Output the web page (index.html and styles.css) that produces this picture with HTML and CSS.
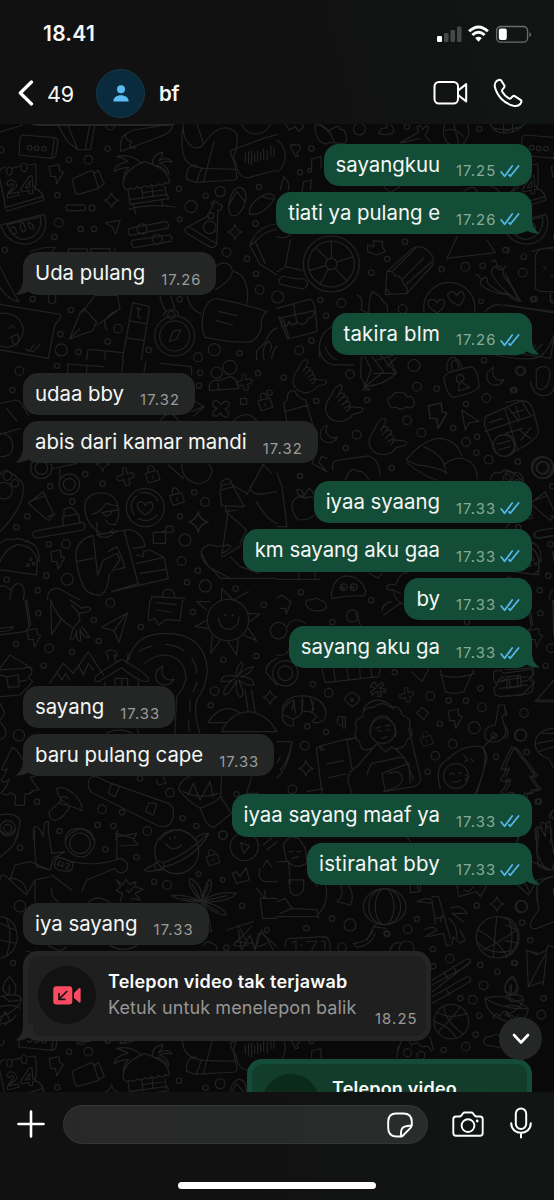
FILE: index.html
```html
<!DOCTYPE html>
<html lang="id">
<head>
<meta charset="utf-8">
<title>bf</title>
<link rel="stylesheet" href="styles.css">
</head>
<body>
<svg class="defs" width="0" height="0">
  <defs>
    <symbol id="ticks" viewBox="0 0 20 14"><path d="M1.2 8 4.600 12.200 12.200 2M9 10.800 10.300 12.200 18.600 2" fill="none" stroke="#53b7ea" stroke-width="1.8" stroke-linejoin="round" stroke-linecap="round"/></symbol>
    <symbol id="tail" viewBox="0 0 18 16"><path d="M0 0H10C10 7 12.500 12.500 18 15.500C12 16 7.500 14.500 4.500 12.300L0 15Z" fill="currentColor"/></symbol>
    <symbol id="star" viewBox="0 0 54 54"><path d="M27 2Q30 22 51 27Q30 32 27 52Q22 32 3 27Q22 22 27 2Z"/></symbol>
    <symbol id="bolt" viewBox="0 0 50 64"><path d="M4 8 33 2 35 21 46 25 26 60 23 37 8 37Z"/></symbol>
    <symbol id="lock" viewBox="0 0 60 64"><path d="M7 30 46 20 55 50 18 61ZM17 26C9 1 33-4 38 22M31 38V46"/></symbol>
    <symbol id="moon" viewBox="0 0 64 64"><path d="M26 3C-8 16-1 62 34 60Q51 59 59 42C36 52 14 29 26 3Z"/></symbol>
    <symbol id="hand" viewBox="0 0 120 120"><path d="M3 80C2 57 18 44 27 23Q35 7 49 4Q58 9 47 27L38 42M43 34Q56 25 61 35L43 54M57 42Q73 37 70 50L52 66M66 56Q80 52 77 65L60 75M75 68Q80 76 67 85M77 70 110 73Q123 80 108 87L85 93C69 120 15 127 3 80"/></symbol>
    <symbol id="cross" viewBox="0 0 60 60"><path d="M21 3Q29-2 33 8L34 21 49 18Q60 22 53 32L39 37 43 51Q36 61 28 53L25 39 11 43Q-1 37 6 28L22 24Z"/></symbol>
    <symbol id="tree" viewBox="0 0 120 180"><path d="M37 2 5 68Q15 74 22 64Q18 83 3 102Q18 111 27 97Q20 125 3 139Q22 151 32 138L47 147 45 176H73L76 141Q91 145 98 132Q112 132 117 128Q101 111 91 90Q102 93 107 87Q92 73 84 56L63 31Q48 4 37 2Z"/></symbol>

    <g id="doodles">
      <g transform="translate(0 120) scale(.3333)">
        <path d="M60 52 67 45 165 53 174 60 167 110 156 115 57 105ZM155 115 163 54M0 36 60 18 70 10M170 10 203 65 235 90 272 88 285 10M205 18 233 89M270 10 256 88M362 94C357 55 370 40 402 30L520 12C515 35 500 43 470 54ZM385 38C370 42 375 62 395 64C385 75 390 88 407 83"/>
        <circle cx="89" cy="83" r="7"/><circle cx="110" cy="85" r="7"/><circle cx="132" cy="86" r="7"/>
        <path d="M0 155Q-2 145 15 142M35 145 62 138M84 135 106 132Q112 180 105 205Q130 215 132 240L22 273Q15 272 13 240L0 180M16 262 128 230"/>
        <ellipse cx="28" cy="153" rx="8" ry="12"/><ellipse cx="72" cy="142" rx="9" ry="13"/>
        <path d="M20 192C26 168 53 183 49 200 47 210 28 213 26 221L55 216 57 225 23 234C15 218 40 205 41 196 38 187 29 192 29 198ZM63 206 87 169 96 167 98 200 106 199 107 207 98 209 98 220 88 221 87 211 64 216ZM76 204 89 202V183Z"/>
        <path d="M2 315 132 283C145 315 134 358 90 371 51 377 15 358 2 315ZM21 314 122 291C127 330 103 354 73 358 51 358 31 342 21 314ZM36 322C45 313 55 340 45 342 34 342 28 330 36 322ZM65 308C73 306 80 333 72 336 62 334 58 314 65 308ZM84 307Q102 311 101 326Q86 331 84 307Z"/>
        <path d="M218 186Q216 175 228 172L270 153Q279 150 282 160L296 205 235 223Q227 223 225 214ZM281 162 295 151 313 192 295 204"/>
        <path d="M202 255H253Q261 264 253 272H203Q192 263 202 255ZM316 308 361 301 347 341 337 321Z"/>
        <path d="M369 193Q370 150 433 125Q504 145 508 187Q504 195 496 187 487 201 477 191 466 204 455 194 444 206 434 197 422 209 411 200 401 213 390 205 378 214 372 202ZM384 209 389 240M495 199 499 228M388 239 502 223 506 236 390 253ZM400 252 407 282M485 239 488 259M425 203 429 236M456 198 459 230M386 268Q450 250 525 261M425 218 490 210M426 130Q390 98 350 110Q370 113 383 124Q345 132 342 155Q365 141 386 143Q366 164 372 184M458 132Q454 105 488 97Q490 108 476 121Q506 108 516 126Q497 121 478 129Q505 137 507 163Q485 136 468 137"/>
        <path d="M388 325 500 304Q511 315 501 325L390 346Q380 336 388 325ZM396 361 510 345Q520 356 512 364L403 383Q390 375 396 361Z"/><circle cx="426" cy="327" r="15"/><circle cx="472" cy="358" r="15"/>
        <path d="M550 10C545 65 585 105 611 72Q664-5 710 40Q715 80 702 105C697 137 710 150 711 174L705 180 587 187 560 178Q558 146 573 138L612 145 708 148M611 72 590 10M548 25Q535 138 590 136M642 65 610 188M604 146 590 184"/>
        <path d="M692 92 790 55 831 44M692 92Q690 105 708 130Q715 178 748 172L831 150M736 101V126M746 95V132M755 93V135M764 101V125M773 92V124M782 98V119M791 87V117M802 90V121M813 78V109M822 85V110"/>
        <circle cx="768" cy="-5" r="47"/>
        <path d="M634 252 642 242 668 258 663 270 654 269 650 373Q642 388 628 380L558 338Q550 328 561 322L621 290 642 250M567 321 651 372"/><circle cx="629" cy="322" r="19"/><circle cx="633" cy="287" r="9"/>
        <path d="M692 283C677 259 696 205 716 202 749 202 741 258 716 281 707 289 698 289 692 283ZM689 252 710 214 734 244M748 280C745 252 794 211 820 225 831 242 786 286 755 283ZM787 230 823 240M750 376Q770 317 831 312M750 376 779 432 831 465M750 376 766 365 795 430M766 365Q792 334 831 327"/>
        <path d="M0 440Q20 482 56 545 25 540 0 502M90 395Q130 380 165 382L156 397M205 397V387H262V397M272 397V386H330V397M345 395V387"/>
        <path d="M0 553 181 583Q188 590 165 613 154 665 145 715L0 690M0 580C48 575 78 610 67 645 54 683 20 687 0 677M27 625Q35 610 43 625M28 654Q44 647 53 642Q62 667 48 674Q35 670 36 652M77 687 86 694 102 675M91 692 98 696 121 672"/>
        <path d="M240 579 209 657 278 632 290 606 252 565ZM209 656 239 628M247 576 285 526H352L360 566 292 616M352 570Q298 597 321 630M146 525V545Q156 558 167 545V525M398 548 449 560 424 720M398 548 367 720M388 603 438 611M380 654 430 661M409 565 423 569M415 562V592L421 595M260 720 264 688 370 698M315 720V694"/>
        <circle cx="524" cy="648" r="60"/><circle cx="524" cy="648" r="45"/><circle cx="514" cy="585" r="11"/><path d="M508 664 519 635 542 629 531 657ZM492 587Q493 571 514 569 538 571 536 589M498 574Q480 545 480 525M525 567 511 525"/>
        <path d="M648 440C674 415 702 438 696 461 690 482 667 497 647 509M702 455C734 461 752 509 739 556M560 523Q572 573 603 580M608 630C603 594 612 538 650 536Q729 550 801 575 781 587 784 622 781 648 752 666 704 670 615 652ZM654 574 710 587M648 602 698 615M831 623Q805 637 799 663L770 693V720M793 720C785 702 790 671 808 665Q820 673 811 693M831 678Q820 690 815 715"/>
        <use href="#bolt" x="144" y="132" width="50" height="64"/><use href="#star" x="310" y="216" width="50" height="50"/><use href="#star" x="680" y="311" width="50" height="50"/>
        <circle cx="3" cy="90" r="9"/><circle cx="207" cy="119" r="8"/><circle cx="265" cy="119" r="13"/><circle cx="323" cy="86" r="8"/><circle cx="331" cy="17" r="13"/><circle cx="172" cy="226" r="8"/><circle cx="276" cy="264" r="9"/><circle cx="176" cy="308" r="13"/><circle cx="163" cy="351" r="8"/><circle cx="242" cy="327" r="8"/><circle cx="282" cy="327" r="8"/><circle cx="537" cy="206" r="8"/><circle cx="573" cy="260" r="18"/><circle cx="539" cy="298" r="7"/><circle cx="617" cy="227" r="8"/><circle cx="661" cy="215" r="15"/><circle cx="777" cy="201" r="8"/><circle cx="767" cy="311" r="8"/><circle cx="680" cy="397" r="13"/><circle cx="741" cy="416" r="8"/><circle cx="768" cy="462" r="8"/><circle cx="779" cy="509" r="13"/><circle cx="14" cy="390" r="8"/><circle cx="98" cy="537" r="8"/><circle cx="213" cy="570" r="8"/><circle cx="181" cy="642" r="8"/><circle cx="184" cy="690" r="18"/><circle cx="354" cy="626" r="13"/><circle cx="323" cy="665" r="8"/><circle cx="236" cy="696" r="8"/><circle cx="446" cy="690" r="8"/><circle cx="539" cy="538" r="8"/><circle cx="643" cy="689" r="18"/><circle cx="719" cy="700" r="8"/><circle cx="594" cy="712" r="13"/>
      </g>
      <g transform="translate(277)  scale(.3333)">
        <path d="M115 376Q110 392 126 421 142 438 162 427L203 432Q212 424 205 400 204 387 190 388 187 374 174 382L155 392 133 374ZM132 377Q160 392 172 425M25 372 36 390 55 380 66 394 80 382 75 370M305 400Q310 380 330 384L328 372M305 400Q335 410 350 396 350 377 340 376M370 428 425 397 420 380 430 376 437 388 448 376 455 384 444 407 462 428M375 428 430 415M505 370C490 402 508 434 525 434M560 430Q585 400 570 370M530 370 545 430M505 390Q535 382 560 410M640 372C655 410 710 408 745 370M652 385Q700 395 735 380M680 372V399M707 372V398M44 434Q38 437 42 444L56 470 63 469 60 457Q75 447 67 435ZM0 420Q28 440 24 474 20 505 0 517M104 511 104 477 132 470 132 504M20 530Q40 545 34 570M20 530 10 570M75 575 80 545 103 540 100 568"/>
        <circle cx="247" cy="387" r="18"/><circle cx="390" cy="380" r="8"/><circle cx="607" cy="387" r="8"/><circle cx="103" cy="446" r="8"/><circle cx="69" cy="517" r="8"/><circle cx="98" cy="511" r="6"/><path d="M640 558Q660 560 685 600M320 560 340 578 368 560M560 575Q590 550 600 575M0 710Q30 720 42 700"/>
      </g>
      <g transform="translate(277 240) scale(.3333)">
        <circle cx="163" cy="72" r="84"/><circle cx="163" cy="72" r="69"/><circle cx="163" cy="72" r="17"/><path d="M163 3V55M228 50 179 66M210 123 174 85M130 132 154 87M97 92 147 77M115 22 152 58M40 0 25 80 75 91M0 95 25 80M15 110 5 120 10 133 75 147Q95 143 90 125 75 110 65 118L15 108"/>
        <path d="M330 95 407 25Q430 12 452 32 478 50 465 78L390 160 325 164ZM330 95Q350 90 353 108 375 105 379 133 395 140 390 160M348 92 418 23M378 116 440 54M389 132 463 66M327 145 342 163M272 15 290 20 290 2 318 5 315 18 325 35 298 45 272 35ZM540-10 510 55 655 38 630 0"/>
        <circle cx="517" cy="204" r="77"/><path d="M480 219C443 198 450 178 465 178Q478 179 480 189 490 171 502 182 507 201 480 219ZM545 197C506 179 508 162 520 156Q535 153 539 167 549 150 558 158 570 177 545 197Z"/>
        <path d="M605 107Q610 125 625 112 635 113 629 126 658 158 695 165 640 159 612 135 605 120 625 112M645 105Q640 83 655 79 685 75 678 105 705 137 725 181 680 158 645 105ZM655 80Q675 100 685 78M660 75 655 60 645 65M605 105 595 105M775 60Q773 23 812 25L850 30M775 60V145Q780 155 800 155H850M820 108H850M800 80 806 88M625 215Q645 190 675 195L831 215M655 345Q750 365 790 350Q815 330 831 285M700 345 720 345M820 160V180Q831 190 850 180"/>
        <path d="M0 205 98 178Q113 180 116 220L120 275 32 297 5 230M5 235 113 212M20 240 35 292M50 195 60 250M15 235V260Q35 260 35 243 45 265 60 245 82 265 95 234 112 230 112 215M240 165Q260 170 253 210L275 220Q275 180 285 155 315 170 318 185 337 192 330 220M127 350V320Q130 275 170 258M127 320Q128 365 170 375H230M145 320Q153 350 180 360"/>
        <use href="#hand" x="45" y="355" width="108" height="108"/><use href="#hand" x="142" y="430" width="120" height="120"/><use href="#hand" x="273" y="530" width="120" height="120"/>
        <path d="M253 350 251 410 265 438Q315 440 358 400L335 350M263 350 283 390 263 438M285 350 320 395 263 440M310 345 358 400 290 400M300 360 350 345M330 380 358 353M265 440 280 450 258 450Z"/>
        <path d="M335 490Q325 475 345 470 350 455 372 458 388 458 388 470 412 465 412 492 405 510 387 500 373 515 358 501 338 508 335 490ZM515 397 581 380Q604 387 606 440 600 457 530 472 510 470 500 412ZM510 393C505 345 540 335 556 385M525 388Q520 360 535 360 545 365 545 384M540 425C530 400 563 396 561 418Q558 423 551 424L577 443 544 453 548 427ZM554 510 606 544 576 549 565 571ZM778 390C800 370 825 380 818 412L812 435Q793 460 778 440ZM760 425C770 480 825 475 831 445"/>
        <path d="M625 530Q680 505 735 482 760 480 770 515L785 575Q780 600 730 625L685 650Q660 650 650 620L622 555ZM622 575 770 525M684 506 720 625M637 548 676 535M703 520 740 510M716 498 727 532M727 570 762 597M762 562 732 600"/><circle cx="680" cy="617" r="32"/><path d="M660 613 700 602M664 630 700 620"/>
        <path d="M20 490Q35 480 31 465 40 445 55 455 60 475 85 480L108 555M20 490 30 545M22 515 95 495M30 545 40 570M115 645 105 670 150 695 125 668 133 650 150 655M168 690Q160 660 190 660L275 648Q305 655 310 705M205 720Q220 675 245 695 260 690 275 720M388 660Q430 605 480 595 540 595 555 650M388 660 420 675Q480 680 510 700M440 620Q510 650 505 700M500 675Q540 640 580 665 605 690 600 715M390 668Q440 710 480 720M640 720Q645 690 670 700 685 680 705 700 730 690 740 720"/>
        <circle cx="795" cy="682" r="32"/><circle cx="795" cy="682" r="18"/>
        <use href="#bolt" x="449" y="485" width="66" height="88"/><use href="#moon" x="126" y="550" width="60" height="64"/><use href="#moon" x="626" y="377" width="60" height="64"/>
        <circle cx="2" cy="171" r="18"/><circle cx="130" cy="180" r="8"/><circle cx="193" cy="189" r="13"/><circle cx="283" cy="98" r="8"/><circle cx="331" cy="57" r="8"/><circle cx="384" cy="5" r="8"/><circle cx="494" cy="88" r="8"/><circle cx="565" cy="80" r="13"/><circle cx="617" cy="77" r="8"/><circle cx="685" cy="30" r="8"/><circle cx="740" cy="50" r="8"/><circle cx="737" cy="98" r="13"/><circle cx="612" cy="184" r="7"/><circle cx="768" cy="178" r="8"/><circle cx="377" cy="207" r="13"/><circle cx="147" cy="227" r="8"/><circle cx="103" cy="302" r="8"/><circle cx="67" cy="331" r="13"/><circle cx="219" cy="403" r="13"/><circle cx="20" cy="413" r="8"/><circle cx="118" cy="483" r="8"/><circle cx="270" cy="480" r="8"/><circle cx="411" cy="376" r="18"/><circle cx="420" cy="440" r="13"/><circle cx="479" cy="446" r="8"/><circle cx="621" cy="361" r="8"/><circle cx="728" cy="392" r="13"/><circle cx="708" cy="450" r="8"/><circle cx="628" cy="474" r="13"/><circle cx="567" cy="492" r="8"/><circle cx="529" cy="564" r="8"/><circle cx="390" cy="541" r="13"/><circle cx="433" cy="578" r="13"/><circle cx="239" cy="584" r="13"/><circle cx="206" cy="624" r="8"/><circle cx="567" cy="606" r="13"/><circle cx="600" cy="590" r="8"/><circle cx="598" cy="638" r="8"/><circle cx="635" cy="659" r="13"/><circle cx="722" cy="665" r="8"/><circle cx="344" cy="684" r="8"/><circle cx="69" cy="708" r="8"/>
      </g>
      <g transform="translate(0 360) scale(.3333)">
        <path d="M203 40V12L310 20M260 38V15M575 45V20L480 10M365 35 370 0M432 35 438 5M628 92V75Q635 58 655 62L690 50Q712 52 716 85ZM655 90V70"/><circle cx="650" cy="38" r="17"/><circle cx="690" cy="22" r="21"/><use href="#cross" x="707" y="40" width="54" height="54"/>
        <path d="M638 125Q653 118 663 134 678 115 688 130 690 140 675 148 692 158 683 171 669 174 662 158 650 175 638 165 640 150 652 145 635 140 638 125M722 115H740V133H722ZM575 155 612 140 580 120M580 168 612 142M700 183Q740 145 770 183M480 183Q510 140 535 183"/>
        <use href="#lock" x="767" y="95" width="56" height="60"/><use href="#lock" x="429" y="310" width="56" height="64"/><use href="#lock" x="502" y="374" width="56" height="70"/><use href="#cross" x="347" y="320" width="60" height="60"/><use href="#star" x="562" y="453" width="66" height="66"/><use href="#star" x="285" y="290" width="46" height="46"/><use href="#bolt" x="148" y="568" width="50" height="64"/>
        <circle cx="124" cy="324" r="32"/><circle cx="124" cy="324" r="19"/><circle cx="208" cy="373" r="31"/><circle cx="208" cy="373" r="18"/><path d="M155 327 230 310M180 360V325M85 430 130 395 161 463 145 482 85 430M92 423 135 407M145 470 165 463M98 520Q100 513 115 511L248 487Q260 497 250 510L110 534Q98 532 98 520ZM190 497 188 470 235 462 240 487M192 470V450Q210 435 225 450L230 460"/>
        <path d="M0 345Q8 330 22 332 45 345 65 365 75 385 65 420 45 470 0 515M0 130 45 120 60 125M0 223 60 205M60 125 85 165M20 145 50 183M0 220Q38 222 38 260 38 290 0 290"/><circle cx="22" cy="348" r="13"/><circle cx="45" cy="370" r="11"/><circle cx="12" cy="392" r="25"/>
        <circle cx="436" cy="443" r="57"/><path d="M435 465C402 443 411 424 424 425 434 427 435 438 437 438 439 424 458 421 459 438 458 450 445 460 435 465M402 463Q382 432 410 408M420 399Q455 390 473 422M470 465Q450 492 415 476"/>
        <path d="M290 512C250 480 240 420 278 403 320 390 350 407 354 440L357 465 347 494Q320 495 318 480M277 463Q305 455 318 430L350 438M305 458 357 449M309 460Q323 478 335 456M290 487 292 525Q320 545 350 511M290 510Q310 535 340 508M279 527Q238 535 228 575Q227 625 250 680Q270 710 305 705 325 690 328 640M228 605 280 595M280 530 293 645 310 600 352 580 360 600 335 635M325 575 350 560 360 580 375 622 345 630M372 510 415 672M290 525 390 508Q430 520 435 560L400 565M410 585 430 590 430 575 450 570 492 592M410 610 492 592 505 656 335 695 415 670M420 640 498 628"/>
        <path d="M0 550Q25 530 35 540 65 530 75 545 105 545 115 575L118 605M0 605Q20 560 55 553 100 558 112 600L110 645 0 630M80 540Q90 550 95 550M30 720Q30 675 55 670 80 675 70 720M0 680Q15 670 30 690M143 720Q140 685 175 685L240 720M455 720V710L555 715M487 710Q490 680 515 690 525 700 525 710"/>
        <path d="M505 315 550 355M545 313Q545 365 600 372 640 360 635 325L627 313M665 380Q655 370 675 357 695 355 696 372L730 435Q740 440 725 440L665 437 660 395ZM667 375 697 370M665 390 700 380M697 375 740 400M740 405 790 313M750 380Q755 410 800 400L831 395M677 440V455L710 450M685 450 665 590M677 455 740 510 720 550M790 313 815 340M770 425Q800 480 831 490M670 590 725 555M660 655C640 620 595 610 605 570Q620 545 650 560L685 555Q705 560 670 578M660 655H831M690 590 720 620 780 640M605 580 625 620 690 655M485 515 498 513V500L518 498 521 515 498 518ZM460 517H497V550H460ZM665 720V685L700 720 745 695"/>
        <circle cx="92" cy="598" r="4"/><circle cx="84" cy="616" r="4"/><circle cx="101" cy="611" r="4"/><circle cx="58" cy="33" r="13"/><circle cx="37" cy="90" r="8"/><circle cx="171" cy="17" r="8"/><circle cx="601" cy="38" r="8"/><circle cx="597" cy="77" r="8"/><circle cx="774" cy="40" r="8"/><circle cx="809" cy="98" r="8"/><circle cx="256" cy="343" r="8"/><circle cx="151" cy="379" r="8"/><circle cx="308" cy="371" r="8"/><circle cx="217" cy="425" r="8"/><circle cx="82" cy="469" r="8"/><circle cx="49" cy="502" r="8"/><circle cx="146" cy="553" r="8"/><circle cx="198" cy="552" r="13"/><circle cx="202" cy="658" r="18"/><circle cx="139" cy="647" r="8"/><circle cx="20" cy="659" r="8"/><circle cx="113" cy="691" r="8"/><circle cx="540" cy="469" r="8"/><circle cx="583" cy="397" r="8"/><circle cx="615" cy="426" r="13"/><circle cx="555" cy="540" r="18"/><circle cx="545" cy="603" r="13"/><circle cx="593" cy="632" r="8"/><circle cx="561" cy="667" r="8"/><circle cx="616" cy="678" r="18"/><circle cx="707" cy="686" r="8"/>
      </g>
      <g transform="translate(277 470) scale(.3333)">
        <path d="M82 85C45 65 30 120 65 150 85 150 105 145 110 135M82 85Q105 75 110 85M82 85 75 60 60 58Q58 78 80 80L95 55Q108 60 108 72M0 170 30 170 15 50 0 10M770 190Q765 205 785 205L850 195M765 235Q790 250 785 300L770 315"/>
        <path d="M163 375Q168 325 205 318 250 318 266 362L262 378Q215 375 165 385ZM85 400Q90 385 105 390 115 380 130 390 150 395 148 412 140 425 120 422 95 425 85 400ZM0 328H130M65 326V308M115 326V305M277 310 302 325 315 310M330 350Q335 340 355 345 375 300 390 310M330 350Q325 362 350 360 350 390 382 405M345 360 370 370M315 425Q315 400 345 395M320 435 370 400M235 430 250 465"/><circle cx="200" cy="352" r="10"/><circle cx="230" cy="352" r="10"/><circle cx="198" cy="353" r="4"/><circle cx="227" cy="353" r="4"/><circle cx="226" cy="438" r="18"/><circle cx="5" cy="482" r="25"/><circle cx="25" cy="610" r="38"/><circle cx="25" cy="610" r="22"/><path d="M30 470Q50 435 85 460M0 555Q40 565 40 510M0 385 15 375 42 395 28 432 25 415 10 415M135 597 145 638 305 620 310 597M170 597 175 632M210 597 215 628M248 597 250 625M282 597 285 622"/>
        <path d="M293 635 300 650 315 636 320 645 308 655 327 658 325 667 308 664 314 678 304 680 300 664 285 675 282 665 296 655 280 650 285 642ZM403 605 435 635 455 598M490 600 505 665Q530 675 560 665L590 600M490 615Q540 630 592 610M775 695 831 630M775 695H831M675 620 660 638 690 630Z"/><use href="#cross" x="365" y="650" width="50" height="50"/>
        <path d="M202 690Q220 655 240 675 260 690 225 710ZM15 720Q25 680 70 678 130 675 145 720M45 720 52 690M75 720V680M110 720 100 682M258 720Q270 695 300 690 340 695 350 720M650 605 670 600 680 610 750 600 765 598 770 615 755 625 770 640 765 665 750 672 670 680 655 675 650 655 660 645 650 630ZM672 632 750 620M690 625V655L722 650V618M668 655 750 645"/>
        <circle cx="69" cy="18" r="8"/><circle cx="72" cy="367" r="8"/><circle cx="282" cy="391" r="8"/><circle cx="166" cy="456" r="8"/><circle cx="353" cy="607" r="8"/><circle cx="108" cy="643" r="8"/><circle cx="155" cy="668" r="13"/><circle cx="225" cy="690" r="4"/><circle cx="460" cy="678" r="13"/><circle cx="515" cy="692" r="8"/><circle cx="567" cy="692" r="8"/><circle cx="610" cy="655" r="8"/><circle cx="570" cy="455" r="8"/><circle cx="690" cy="25" r="12"/>
      </g>
      <g transform="translate(0 600) scale(.3333)">
        <path d="M75 0 88 80 75 95 0 105M80 0 92 75M0 95Q35 95 40 80L0 85M152 0 155 105 185 55M152 0Q170 55 220 85M210 0 245 25Q270 15 272 28 260 40 235 38L215 15M235 38 240 60 220 85M220 85 210 115Q225 125 230 90 228 128 242 122L240 88Q250 115 270 112L245 80M305 82 383 38 357 127 342 92ZM342 92 378 42M450 0 445 45Q440 70 465 55L475 75 500 58 540 62 548 0M470 8 530 14M468 30 515 36"/>
        <circle cx="684" cy="60" r="62"/><path d="M655 55Q660 90 690 88 718 80 717 50M620 30 590 5 630 5M745 40 780 42 748 65M622 60 585 80 625 85M637 105 632 160 660 122M684 125 710 165 715 118M730 105 770 122 745 85"/><circle cx="676" cy="46" r="2"/><circle cx="698" cy="46" r="2"/>
        <path d="M385 180Q405 100 495 100 615 100 622 210 620 260 590 300 580 340 600 400M435 190Q460 165 500 165 555 175 558 235 550 270 530 290L525 400M385 160 380 190M415 155Q430 145 455 138M497 133Q530 135 552 152M575 175Q590 195 590 220M592 245 580 275M570 300V335M565 360 568 395M148 250 190 190 220 220 265 155 310 225M170 215 185 240 197 220 210 240M235 195 250 225 265 190 280 210M285 235Q285 225 365 178 450 225 445 242 430 255 365 203L295 245Q285 245 285 235ZM325 180 322 165Q310 155 330 150 355 150 350 170L342 165 348 185M315 245V258M415 240V258M345 258V235H383V258M365 235V258"/><use href="#moon" x="463" y="195" width="64" height="64"/>
        <path d="M0 205 30 165 95 205M0 210 70 205Q100 195 95 220L85 232 98 245 85 260 60 285 0 290M20 230 55 225 57 260 25 262ZM0 225 18 230M58 245 80 240M710 230Q660 220 665 245 695 245 705 235 665 265 672 285 690 285 710 240 705 280 720 290 740 290 715 240 740 260 762 255 760 230 720 230 750 225 760 200 730 205 712 230 735 195 725 185 705 205 710 230ZM735 270 745 335M755 270 765 335M665 395Q690 340 745 335 800 340 831 395ZM625 365Q650 325 690 325 710 330 720 340M625 368H680M831 175Q790 195 800 220L831 255M0 310 15 340 0 360M0 365Q30 400 10 415L0 418M320 400Q360 380 395 400M415 400 412 385"/>
        <use href="#tree" x="0" y="440" width="120" height="180"/><use href="#bolt" x="78" y="82" width="48" height="64"/><use href="#star" x="786" y="268" width="48" height="48"/>
        <path d="M170 565Q195 555 230 590 250 615 245 632 230 625 200 615 170 590 170 565ZM205 595Q180 580 180 610 190 620 205 610M180 605 148 635Q145 655 165 662 190 655 210 620M265 555Q265 510 320 545L505 610Q530 625 515 665 500 690 465 673L280 580Q265 570 265 555ZM333 555Q345 550 358 560L345 590 325 580ZM445 610Q460 605 470 615L460 645 437 635ZM470 540 475 555 498 550 490 530M537 570Q535 555 550 540L570 528M537 570Q565 605 600 625 645 610 662 590L665 530M550 575Q600 600 655 580M565 585 580 550 600 600 630 545 640 590M600 625 620 670 640 683 695 640 662 590M640 683 620 670M0 645Q45 635 60 660 60 690 45 720M100 720V690Q105 670 120 690L130 710Q130 660 145 665V700M195 720Q200 685 235 685 270 690 280 720M348 720V700L400 715M480 720Q500 690 540 690 570 700 590 720M740 580 755 530M740 580H775"/><circle cx="23" cy="685" r="12"/><circle cx="23" cy="685" r="23"/>
        <circle cx="331" cy="8" r="13"/><circle cx="115" cy="40" r="8"/><circle cx="281" cy="60" r="8"/><circle cx="147" cy="145" r="13"/><circle cx="216" cy="157" r="8"/><circle cx="296" cy="123" r="8"/><circle cx="422" cy="81" r="8"/><circle cx="579" cy="36" r="8"/><circle cx="791" cy="14" r="8"/><circle cx="48" cy="132" r="8"/><circle cx="131" cy="197" r="8"/><circle cx="670" cy="179" r="8"/><circle cx="769" cy="168" r="8"/><circle cx="644" cy="273" r="13"/><circle cx="632" cy="316" r="8"/><circle cx="57" cy="406" r="17"/><circle cx="111" cy="605" r="8"/><circle cx="306" cy="628" r="13"/><circle cx="366" cy="637" r="8"/><circle cx="340" cy="678" r="8"/><circle cx="293" cy="675" r="8"/><circle cx="178" cy="693" r="8"/><circle cx="510" cy="578" r="13"/><circle cx="420" cy="535" r="8"/><circle cx="442" cy="693" r="13"/><circle cx="548" cy="655" r="8"/><circle cx="589" cy="678" r="8"/><circle cx="710" cy="583" r="8"/><circle cx="669" cy="706" r="13"/>
      </g>
      <g transform="translate(277 700) scale(.3333)">
        <path d="M15 50Q15 15 50 0M15 50Q20 80 50 78L48 58Q70 50 75 35 105 30 120 50L105 65Q125 75 145 55 155 25 125 0M50 0 55 40M75 35 78 0M105 35 110 0M20 45 50 58M205 50H185Q175 65 188 75H197V85M205 50V85M197 50V75"/>
        <circle cx="317" cy="92" r="38"/><path d="M280 100Q282 40 330 50 365 80 355 110M285 145Q250 160 248 125 225 110 240 85 225 60 258 50 255 20 290 22 315 0 340 22 370 15 375 45 405 55 398 80 415 105 390 120 385 150 350 145M303 93H315M325 90H338M315 115 330 110M297 85 310 80M325 77 340 75M118 145Q125 135 238 112L215 120M118 145 135 281M148 192 200 182M155 233 208 222M210 120 225 205M90 275 140 265M300 130Q275 160 240 200 205 220 215 250L225 281M300 130 325 155 345 140Q380 160 395 200L410 240M395 85 430 230Q435 250 410 260L320 275M270 225Q275 200 285 190L380 170 395 195M315 220 395 190 400 250M315 220 325 275M335 220Q380 205 375 245 370 260 330 270M130 140 142 150 130 150Z"/>
        <path d="M490 265Q470 200 510 180 550 140 590 140 625 130 630 175L600 281M620 150Q635 190 595 281M615 145 655 105M625 115Q615 80 655 75L665 15 682 15 685 40 675 50 680 70Q700 110 660 125 635 130 625 115"/><circle cx="537" cy="228" r="37"/><circle cx="651" cy="107" r="8"/><path d="M518 225Q525 215 532 223M545 220 555 217M525 245Q540 250 550 240M560 165 573 180 563 185M580 175 590 185M565 225 575 230 565 240M0 125 45 125Q35 180 10 210M0 235Q35 200 45 125M0 190 10 170"/>
        <use href="#tree" x="667" y="138" width="120" height="180"/><path d="M831 85Q775 90 775 130 775 165 815 175L831 205M831 100 795 100M831 120 782 130M831 140 785 155M775 0H831"/>
        <use href="#star" x="62" y="180" width="50" height="50"/><use href="#star" x="636" y="588" width="48" height="48"/><use href="#bolt" x="510" y="25" width="50" height="64"/><use href="#lock" x="425" y="90" width="48" height="52"/><path d="M418 40 435 22 455 38 440 58Z"/>
        <path d="M20 430 40 410 65 415 85 445 90 490 65 500 45 495 28 480 20 440ZM35 455H47M60 455H70M45 475 65 470M0 485 35 485 40 550M35 540H80V570Q55 600 40 575ZM90 490 120 560M145 550Q155 590 140 620L120 650H0M0 605 25 595 45 625 10 640M45 625 120 630 125 655M190 555Q205 585 180 605L220 615Q235 590 215 555M390 410 400 425M400 555V578L430 575V555M420 555 425 575"/>
        <ellipse cx="323" cy="620" rx="64" ry="54"/><ellipse cx="323" cy="620" rx="28" ry="54"/><ellipse cx="323" cy="620" rx="48" ry="54"/><path d="M300 670 290 680 325 685M290 680 270 720M420 605Q450 590 465 600L475 670M465 590 485 590 520 715M420 605 465 610M475 655 505 650M440 690Q470 675 480 690L445 710M520 625Q550 610 570 640L525 640 560 665M515 655Q540 670 540 715M495 645 490 665M540 555 545 590 600 575 610 590 630 555M560 570 575 575 590 560M785 400Q775 380 795 385L790 370Q805 360 810 385 820 370 825 395L820 430M785 400 780 460 805 510 831 510M765 660Q750 690 780 685L831 665M780 570Q780 540 831 530M780 570 785 630 765 660M831 335Q810 340 820 355"/>
        <circle cx="615" cy="22" r="13"/><circle cx="741" cy="39" r="13"/><circle cx="488" cy="71" r="8"/><circle cx="592" cy="83" r="18"/><circle cx="527" cy="132" r="13"/><circle cx="475" cy="167" r="13"/><circle cx="452" cy="215" r="8"/><circle cx="730" cy="105" r="18"/><circle cx="657" cy="170" r="8"/><circle cx="749" cy="156" r="8"/><circle cx="782" cy="305" r="8"/><circle cx="91" cy="79" r="8"/><circle cx="147" cy="96" r="8"/><circle cx="83" cy="137" r="13"/><circle cx="46" cy="268" r="13"/><circle cx="165" cy="656" r="8"/><circle cx="219" cy="675" r="18"/><circle cx="88" cy="685" r="8"/><circle cx="392" cy="688" r="13"/><circle cx="420" cy="657" r="8"/><circle cx="331" cy="702" r="8"/><circle cx="599" cy="617" r="8"/><circle cx="732" cy="620" r="18"/><circle cx="736" cy="668" r="8"/>
      </g>
      <g transform="translate(0 830) scale(.3333)">
        <path d="M55 0Q55 45 0 80M0 0Q20 25 45 0M105 0Q100 45 110 110L150 120M145 0 155 70 195 65M195 35Q205 85 255 80 285 60 285 30 275 0 245-5 205 5 195 35M170 80 215 95Q280 110 345 90M150 120 160 85 195 65M345 90 360 85Q390 95 380 120 360 140 345 115L260 150 245 185M350 90 352 0M352 20 410 10 400 30 415 45 358 48M345 115 260 150M45 105 90 95 150 120M45 105 30 150 80 195 105 150 150 140M30 150Q0 120 0 150M105 150 105 215M155 175Q150 200 175 215M155 135 215 180M163 105Q165 78 190 85L218 98Q220 122 205 125L175 120Q165 115 163 105ZM35 145Q75 150 80 185M180 92 173 104 186 108M188 96V112M196 103Q207 95 208 106L197 116 208 119"/><circle cx="240" cy="40" r="31"/>
        <circle cx="530" cy="65" r="66"/><path d="M475 95 433 120Q440 130 490 115M490 98Q560 75 625 10 605 10 590 22M495 110Q585 85 627 10M498 40Q515 70 545 45M510 22V28M525 20V26"/><circle cx="478" cy="107" r="14"/><circle cx="733" cy="50" r="42"/><path d="M722 38 749 48 731 70ZM790 45 831 10M800 60 831 35"/>
        <path d="M350 150 368 165 378 147 388 163 408 155 403 170 430 178 405 190 420 210 395 205M350 150 362 170 348 182 368 190 360 215M380 180 387 188 400 172M697 130 710 125 720 140 738 113 748 150 710 160ZM790 110 800 90 815 110M780 115Q770 150 800 155L831 155M770 175 795 205M780 205 788 265H831M780 205H831M795 205V180"/>
        <path d="M605 215Q560 170 570 145 610 165 605 215 615 160 630 147 645 180 605 215 650 180 710 190 680 220 605 215 665 225 680 255 640 255 605 215 625 240 635 305 600 290 605 215 560 220 515 197 550 190 605 215M605 215 575 160M605 215 625 165M605 215 680 197M605 215 550 205M605 215 655 245"/>
        <path d="M680 300 760 275M715 285 740 335M755 290 700 345 720 350 745 345M705 335 760 340M765 360 775 310 785 310 831 350M775 350 800 340M610 345Q620 330 635 340 655 345 650 360M265 218Q290 190 330 218M0 260Q50 265 52 325 45 375 0 385M0 280 45 300M0 330 50 340M20 265Q40 320 20 375M78 363 110 370M145 347 180 363 200 350M330 347Q370 370 410 347"/>
        <path d="M8 480Q10 455 28 440 55 465 45 490 30 505 8 480M28 465V495M0 500Q60 485 65 510 50 545 0 560M10 500 30 515 60 510M0 530Q40 520 60 535M0 575 15 545 30 570 15 585M0 582Q35 580 48 555M360 640Q370 645 405 630M230 640Q250 650 260 630"/>
        <use href="#lock" x="612" y="52" width="52" height="60"/>
        <circle cx="60" cy="229" r="17"/><circle cx="316" cy="58" r="8"/><circle cx="409" cy="82" r="8"/><circle cx="60" cy="53" r="8"/><circle cx="463" cy="155" r="8"/><circle cx="501" cy="165" r="13"/><circle cx="596" cy="132" r="7"/><circle cx="668" cy="149" r="7"/><circle cx="727" cy="227" r="8"/><circle cx="679" cy="353" r="8"/><circle cx="801" cy="300" r="7"/><circle cx="39" cy="399" r="8"/><circle cx="669" cy="15" r="12"/><circle cx="323" cy="631" r="8"/>
      </g>
      <g transform="translate(230 930) scale(.3333)">
        <path d="M25 0 35 60 60 15 75 60 95 0 130 60M165 50Q165 20 190 25L285 20Q302 25 300 62M185 38 198 33V60M212 45H216M230 35 260 33 245 60M275 34 285 33V60M370 40Q410 40 430 0M370 40 380 52Q425 45 435 10M595 20 640 10M640 10 650 48 665 45 670 20 690 40 705 30 690 0M480 62Q490 30 515 40M607 150 705 90Q722 82 722 95L607 185M607 165 715 105M607 200 710 140Q728 140 720 155L607 220M640 125 655 145M670 110 680 128M650 180 660 195"/>
        <circle cx="530" cy="55" r="22"/><circle cx="801" cy="22" r="62"/><path d="M745 0Q800 30 830 75M760 60Q810 35 860 0M800-40 790 80M740 35Q780 80 850 60M890 60 895 170 940 155M890 60 920 75 950 60 955 45M950 60 940 165M895 170 945 75"/>
        <circle cx="664" cy="275" r="52"/><path d="M620 245Q660 270 712 250M625 305Q670 260 690 232M640 230Q650 280 700 312M614 275Q660 290 680 325"/>
        <path d="M765 205Q830 185 895 235 890 285 835 275 770 260 765 205ZM765 205Q820 240 895 235M825 185Q820 155 850 140 865 160 860 180 840 205 825 185M840 165V205M790 265Q795 240 810 260 825 225 835 260 850 250 855 270M760 335Q765 315 785 320 800 305 810 320M760 335Q765 350 790 348 800 355 810 350M505 360 515 330Q535 320 545 345 560 330 575 350 600 345 605 365M500 383 505 350M600 320 610 360"/>
        <circle cx="610" cy="109" r="8"/><circle cx="659" cy="86" r="13"/><circle cx="751" cy="105" r="8"/><circle cx="802" cy="125" r="8"/><circle cx="852" cy="98" r="8"/><circle cx="901" cy="31" r="8"/><circle cx="761" cy="166" r="13"/><circle cx="691" cy="205" r="8"/><circle cx="728" cy="209" r="13"/><circle cx="748" cy="257" r="8"/><circle cx="934" cy="254" r="13"/><circle cx="941" cy="205" r="8"/><circle cx="737" cy="314" r="8"/><circle cx="707" cy="350" r="13"/><circle cx="641" cy="360" r="8"/><circle cx="336" cy="52" r="13"/><circle cx="609" cy="57" r="8"/><circle cx="470" cy="10" r="8"/><circle cx="533" cy="368" r="12"/><circle cx="573" cy="376" r="12"/>
      </g>
    </g>
  </defs>
</svg>

<header class="top">
  <div class="status">
    <span class="clock">18.41</span>
    <svg class="signals" width="96" height="20" viewBox="0 0 96 20">
      <rect x="1" y="11" width="5" height="6" rx="1.200" fill="#fff"/><g fill="#464848"><rect x="8" y="8" width="4.500" height="9" rx="1.200"/><rect x="14.500" y="5" width="4.500" height="12" rx="1.200"/><rect x="21" y="1.500" width="4.500" height="15.500" rx="1.200"/></g>
      <g fill="none" stroke="#fff" stroke-width="2.900"><path d="M33.100 6.300Q42.500-2.500 51.900 6.300M36.400 10Q42.500 4.300 48.600 10"/></g><path d="M42.500 16.800 39.200 13.100Q42.500 10.300 45.800 13.100Z" fill="#fff"/>
      <rect x="60.600" y="1.500" width="31" height="15.700" rx="4.200" fill="none" stroke="#6c6e6e" stroke-width="1.300"/><rect x="62.800" y="3.500" width="8" height="11.600" rx="2" fill="#fff"/><path d="M93.500 7V12Q95 11 95 9.500T93.500 7Z" fill="#777"/>
    </svg>
  </div>
  <div class="nav">
    <svg class="back" width="16" height="26" viewBox="0 0 16 26"><path d="M13.500 2 2.300 13 13.500 24" fill="none" stroke="#fff" stroke-width="3.200" stroke-linecap="round" stroke-linejoin="round"/></svg>
    <span class="count">49</span>
    <span class="avatar"><svg width="16" height="17" viewBox="0 0 16 17" fill="#5bbcf2"><circle cx="8" cy="4.300" r="4"/><path d="M.4 16.400C.2 12.500 4 10.300 8 10.300S15.800 12.500 15.600 16.400Z"/></svg></span>
    <span class="name">bf</span>
    <svg class="video" width="36" height="26" viewBox="0 0 36 26" fill="none" stroke="#fff" stroke-width="2" stroke-linejoin="round"><rect x="1.500" y="2" width="23.500" height="21.500" rx="4.500"/><path d="M25 10.600 33.200 4.100V21.400L25 15"/></svg>
    <svg class="phone" width="30" height="30" viewBox="0 0 30 30"><path d="M5.700 2 3.700 2.900Q.9 5.200 2 9.500C4.500 18.500 11.500 25.600 20.400 27.800Q25 28.700 27.300 26Q29 23.600 28.200 22.400L22.200 18.300Q20.700 17.400 19.500 18.500L17.700 20.400Q16.700 21 15.500 20.200Q11.400 17.500 9.300 13.700Q8.700 12.500 9.500 11.500L11 9.700Q12 8.500 11.200 7.200L8.300 2.600Q7.200 1.200 5.700 2Z" fill="none" stroke="#fff" stroke-width="2" stroke-linejoin="round"/></svg>
  </div>
</header>

<main class="chat">
  <svg class="wallpaper" width="554" height="968" viewBox="0 124 554 968"><use href="#doodles"/><svg x="0" y="1040" width="505" height="52" viewBox="0 1040 505 52"><use href="#doodles" y="892"/></svg><svg x="505" y="124" width="49" height="968" viewBox="505 124 49 968"><use href="#doodles" x="502"/></svg></svg>
  <div class="thread">
    <div class="group in"><div class="bubble earlier"></div></div>
    <div class="group out">
      <div class="bubble"><span class="text">sayangkuu</span><time>17.25</time><svg class="ticks"><use href="#ticks"/></svg></div>
      <div class="bubble"><span class="text">tiati ya pulang e</span><time>17.26</time><svg class="ticks"><use href="#ticks"/></svg><svg class="tail"><use href="#tail"/></svg></div>
    </div>
    <div class="group in">
      <div class="bubble"><span class="text">Uda pulang</span><time>17.26</time><svg class="tail"><use href="#tail"/></svg></div>
    </div>
    <div class="group out">
      <div class="bubble"><span class="text wide">takira blm</span><time>17.26</time><svg class="ticks"><use href="#ticks"/></svg><svg class="tail"><use href="#tail"/></svg></div>
    </div>
    <div class="group in">
      <div class="bubble"><span class="text">udaa bby</span><time>17.32</time></div>
      <div class="bubble"><span class="text">abis dari kamar mandi</span><time>17.32</time><svg class="tail"><use href="#tail"/></svg></div>
    </div>
    <div class="group out">
      <div class="bubble"><span class="text">iyaa syaang</span><time>17.33</time><svg class="ticks"><use href="#ticks"/></svg></div>
      <div class="bubble"><span class="text">km sayang aku gaa</span><time>17.33</time><svg class="ticks"><use href="#ticks"/></svg></div>
      <div class="bubble"><span class="text">by</span><time>17.33</time><svg class="ticks"><use href="#ticks"/></svg></div>
      <div class="bubble"><span class="text">sayang aku ga</span><time>17.33</time><svg class="ticks"><use href="#ticks"/></svg><svg class="tail"><use href="#tail"/></svg></div>
    </div>
    <div class="group in">
      <div class="bubble"><span class="text">sayang</span><time>17.33</time></div>
      <div class="bubble"><span class="text">baru pulang cape</span><time>17.33</time><svg class="tail"><use href="#tail"/></svg></div>
    </div>
    <div class="group out">
      <div class="bubble"><span class="text">iyaa sayang maaf ya</span><time>17.33</time><svg class="ticks"><use href="#ticks"/></svg></div>
      <div class="bubble"><span class="text wide">istirahat bby</span><time>17.33</time><svg class="ticks"><use href="#ticks"/></svg><svg class="tail"><use href="#tail"/></svg></div>
    </div>
    <div class="group in">
      <div class="bubble"><span class="text">iya sayang</span><time>17.33</time></div>
      <div class="bubble call">
        <div class="card">
          <span class="disc"><svg width="28" height="19" viewBox="0 0 28 19"><rect x=".3" y=".3" width="19" height="18.200" rx="3.300" fill="#fb4b63"/><path d="M21 7 26.200 2Q27.600 1.500 27.600 3V15.500Q27.600 17 26.200 16.500L21 12Z" fill="#fb4b63"/><path d="M14.200 5 6 13.100M6 7V13.300H12.500" fill="none" stroke="#161213" stroke-width="1.700"/></svg></span>
          <div class="lines"><strong>Telepon video tak terjawab</strong><span class="hint">Ketuk untuk menelepon balik</span></div>
          <time>18.25</time>
        </div>
        <svg class="tail"><use href="#tail"/></svg>
      </div>
    </div>
    <div class="group out">
      <div class="bubble call placed"><div class="card"><span class="disc"></span><div class="lines"><strong>Telepon video</strong></div></div></div>
    </div>
  </div>
  <span class="jump"><svg width="18" height="12" viewBox="0 0 18 12"><path d="M2 2 9 9.500 16 2" fill="none" stroke="#fff" stroke-width="2.600" stroke-linecap="round" stroke-linejoin="round"/></svg></span>
</main>

<footer class="composer">
  <div class="tools">
    <svg class="plus" width="28" height="28" viewBox="0 0 28 28"><path d="M14 1.500V26.500M1.500 14H26.500" stroke="#fff" stroke-width="2.600" stroke-linecap="round"/></svg>
    <div class="field"><svg width="26" height="26" viewBox="0 0 26 26" fill="none" stroke="#fff" stroke-width="1.900" stroke-linejoin="round"><path d="M14.500 24.500H9Q1.200 24 1.200 16V9.500Q1.500 1.500 9 1.500H16.500Q24.500 1.500 24.800 9.500V13.200Q24.500 14.500 23.500 15.800L16 23.500Q15.500 24.300 14.500 24.500Z"/><path d="M14 24.200V20Q14.500 14.800 19 14.300L24.500 13.500"/></svg></div>
    <svg class="camera" width="32" height="27" viewBox="0 0 32 27" fill="none" stroke="#fff" stroke-width="1.900" stroke-linejoin="round"><path d="M4 5.500H7.800Q9.200 5.200 10 3.800L11 2.400Q11.500 1.500 12.800 1.500H19.200Q20.500 1.500 21 2.400L22 3.800Q22.800 5.200 24.200 5.500H28Q30.700 5.500 30.700 8.200V22Q30.700 24.800 28 24.800H4Q1.300 24.800 1.300 22V8.200Q1.300 5.500 4 5.500Z"/><circle cx="16" cy="14.600" r="6.400"/><circle cx="25.200" cy="10" r="1.400" fill="#fff" stroke="none"/></svg>
    <svg class="mic" width="22" height="32" viewBox="0 0 22 32" fill="none" stroke="#fff" stroke-width="2" stroke-linecap="round"><rect x="5.800" y="1.500" width="10.400" height="20.500" rx="5.200"/><path d="M1.200 16.200C1.500 29 20.500 29 20.800 16.200M11 26V30.500"/></svg>
  </div>
  <div class="homebar"></div>
</footer>
</body>
</html>
```
FILE: styles.css
```css
* { box-sizing: border-box; }
body {
  margin: 0;
  width: 554px;
  height: 1200px;
  display: flex;
  flex-direction: column;
  overflow: hidden;
  background: #090909;
  color: #f5f7f6;
  font-family: Inter, "Liberation Sans", sans-serif;
}
svg { display: block; flex: none; }
.defs { position: absolute; }

.top {
  height: 124px;
  flex: none;
  background: linear-gradient(75deg, #111 55%, #111615);
}
.status {
  height: 66px;
  display: flex;
  justify-content: space-between;
  padding: 22px 22px 0 43px;
}
.clock { font-size: 21px; line-height: 24px; font-weight: 600; letter-spacing: .25px; }
.signals { margin-top: 3px; }
.nav { height: 54px; display: flex; align-items: center; padding: 0 31px 0 18px; }
.count { margin-left: 13px; width: 49px; padding-top: 2px; font-size: 21.500px; letter-spacing: -.2px; }
.avatar {
  width: 49px;
  height: 49px;
  border-radius: 50%;
  background: #0a2a3d;
  border: 1px solid #163a49;
  display: flex;
  align-items: center;
  justify-content: center;
}
.name { margin-left: 14px; font-size: 20.5px; font-weight: 600; letter-spacing: -.2px; }
.video { margin-left: auto; }
.phone { margin-left: 24px; }

.chat {
  height: 968px;
  flex: none;
  display: grid;
  overflow: hidden;
  position: relative;
}
.wallpaper {
  grid-area: 1 / 1;
  fill: none;
  stroke: #212222;
  stroke-width: 3.700;
  stroke-linejoin: round;
  stroke-linecap: round;
}
.thread {
  grid-area: 1 / 1;
  position: relative;
  height: 968px;
  padding: 0 22px 0 23px;
  display: flex;
  flex-direction: column;
  gap: 18.06px;
}
.group { display: flex; flex-direction: column; gap: 6px; flex: none; }
.in { align-items: flex-start; color: #242625; }
.out { align-items: flex-end; color: #144d37; }
.bubble {
  position: relative;
  height: 42.2px;
  border-radius: 15px;
  background: currentColor;
  display: flex;
  padding: 0 14px 0 12px;
}
.out .bubble { padding-right: 12px; }
.earlier { width: 160px; margin-top: -40.300px; }
.text {
  color: #f5f7f6;
  font-size: 20.4px;
  line-height: 42px;
  letter-spacing: -.02px;
  white-space: nowrap;
}
.wide { letter-spacing: .2px; }
time {
  margin-left: 16px;
  width: 41px;
  padding-top: 17.500px;
  color: #9a9c9b;
  font-size: 14.8px;
  line-height: 21px;
  letter-spacing: 1.1px;
  white-space: nowrap;
}
.out time { color: #86aa99; }
.ticks { width: 20px; height: 14px; margin: 20px 0 0 3px; }
.tail { position: absolute; width: 18px; height: 16px; right: -8px; bottom: 0; }
.in .tail { right: auto; left: -8px; transform: scaleX(-1); }

.call { width: 408px; height: 90px; padding: 5px; }
.out .call { width: 285px; padding: 5px; }
.card {
  flex: 1;
  min-width: 0;
  display: flex;
  border-radius: 10px;
  background: #1f1f1f;
  padding: 10px 0 0 10px;
}
.placed .card { background: #123d2b; }
.disc {
  width: 58px;
  height: 58px;
  flex: none;
  border-radius: 50%;
  background: #121212;
  display: flex;
  align-items: center;
  justify-content: center;
}
.placed .disc { background: #0b2a1c; }
.lines { width: 252px; margin: 3px 0 0 12px; display: flex; flex-direction: column; flex: none; white-space: nowrap; }
.placed .lines { width: 180px; margin-top: 2px; }
.lines strong { color: #fafafa; font-size: 18px; line-height: 25px; font-weight: 600; letter-spacing: .2px; }
.hint { color: #969696; font-size: 18px; line-height: 27px; letter-spacing: .1px; }
.call time { padding-top: 43px; margin-left: 15px; }
.jump {
  position: absolute;
  right: 12px;
  top: 893px;
  width: 43px;
  height: 43px;
  border-radius: 50%;
  background: #252727;
  display: flex;
  align-items: center;
  justify-content: center;
}

.composer {
  height: 108px;
  flex: none;
  background: linear-gradient(90deg, #111 45%, #111615);
  display: flex;
  flex-direction: column;
  align-items: center;
}
.tools { width: 554px; height: 90px; padding: 13px 22px 0 17px; display: flex; align-items: flex-start; }
.plus { margin-top: 5px; }
.field {
  width: 365px;
  height: 39px;
  margin-left: 18px;
  border: 1px solid #353737;
  border-radius: 20px;
  background: linear-gradient(90deg, #282828, #282c2b);
  display: flex;
  align-items: center;
  justify-content: flex-end;
  padding-right: 14px;
}
.camera { margin: 6px 0 0 24px; }
.mic { margin: 2px 0 0 26px; }
.homebar { width: 198px; height: 7px; border-radius: 4px; background: #fff; }
```
